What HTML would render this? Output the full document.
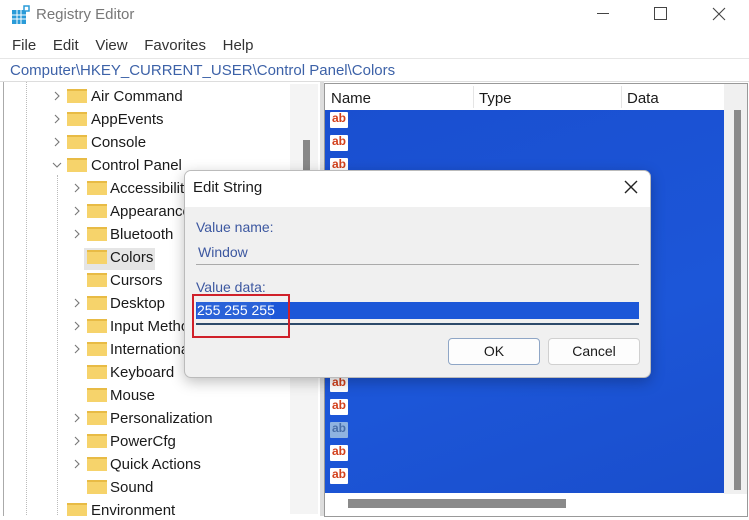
<!DOCTYPE html>
<html><head><meta charset="utf-8"><style>
*{margin:0;padding:0;box-sizing:border-box}
body{width:749px;height:520px;overflow:hidden;background:#fff;font-family:"Liberation Sans",sans-serif;position:relative;color:#1a1a1a}
.a{position:absolute;white-space:nowrap}
.t{font-size:15px}
.fold{position:absolute;width:20px;height:14px;background:#f6d36b;border-top:2px solid #e8bb45}
.chev{position:absolute;width:8px;height:12px}
.ab{position:absolute;left:330px;width:18px;height:16px;background:#fff;color:#d2401c;font-weight:bold;font-size:12px;line-height:13px;text-align:center;border-radius:1px}
</style></head><body>
<svg width="0" height="0" style="position:absolute"><defs><symbol id="cv" viewBox="0 0 8 12"><polyline points="2,2 6,6 2,10" fill="none" stroke="#777" stroke-width="1.1"/></symbol><symbol id="cd" viewBox="0 0 12 8"><polyline points="2,2 6,6 10,2" fill="none" stroke="#777" stroke-width="1.1"/></symbol></defs></svg>
<!-- title bar -->
<svg class="a" style="left:11px;top:5px" width="20" height="20"><rect x="1" y="5" width="14" height="14" fill="#2a9bd8"/><path d="M1 10h14M1 14h14M6 5v14M10 5v14" stroke="#fff" stroke-width="1"/><rect x="13" y="1" width="5" height="5" fill="#fff" stroke="#2a9bd8" stroke-width="1.5"/></svg>
<div class="a t" style="left:36px;top:6px;color:#777">Registry Editor</div>
<div class="a" style="left:597px;top:13px;width:12px;height:1px;background:#444"></div>
<div class="a" style="left:654px;top:7px;width:13px;height:13px;border:1px solid #444"></div>
<svg class="a" style="left:712px;top:7px" width="14" height="14"><path d="M1 1L13 13M13 1L1 13" stroke="#444" stroke-width="1.1"/></svg>
<div class="a t" style="left:12px;top:37px;color:#333">File&nbsp;&nbsp;&nbsp;&nbsp;Edit&nbsp;&nbsp;&nbsp;&nbsp;View&nbsp;&nbsp;&nbsp;&nbsp;Favorites&nbsp;&nbsp;&nbsp;&nbsp;Help</div>
<div class="a" style="left:0;top:58px;width:749px;height:1px;background:#e6e6e6"></div>
<div class="a t" style="left:10px;top:62px;color:#3d62a8">Computer\HKEY_CURRENT_USER\Control Panel\Colors</div>
<div class="a" style="left:0;top:81px;width:749px;height:1px;background:#ddd"></div>
<div class="a" style="left:3px;top:82px;width:1px;height:435px;background:#aaa"></div>
<div class="a" style="left:26px;top:82px;width:0;height:435px;border-left:1px dotted #bbb"></div>
<!-- tree scrollbar -->
<div class="a" style="left:290px;top:84px;width:28px;height:430px;background:#f4f4f4"></div>
<div class="a" style="left:303px;top:140px;width:7px;height:40px;background:#888"></div>
<div class="a" style="left:320px;top:82px;width:4px;height:435px;background:#ddd"></div>
<!-- tree -->
<svg class="chev" style="left:53px;top:90px"><use href="#cv"/></svg><div class="fold" style="left:67px;top:89px"></div><div class="a t" style="left:91px;top:88px">Air Command</div>
<svg class="chev" style="left:53px;top:113px"><use href="#cv"/></svg><div class="fold" style="left:67px;top:112px"></div><div class="a t" style="left:91px;top:111px">AppEvents</div>
<svg class="chev" style="left:53px;top:136px"><use href="#cv"/></svg><div class="fold" style="left:67px;top:135px"></div><div class="a t" style="left:91px;top:134px">Console</div>
<svg class="a" style="left:51px;top:161px" width="12" height="8"><use href="#cd"/></svg><div class="fold" style="left:67px;top:158px"></div><div class="a t" style="left:91px;top:157px">Control Panel</div>
<div class="a" style="left:57px;top:175px;width:0;height:340px;border-left:1px dotted #bbb"></div>
<div class="a" style="left:84px;top:248px;width:71px;height:22px;background:#e5e5e5"></div>
<svg class="chev" style="left:73px;top:182px"><use href="#cv"/></svg><div class="fold" style="left:87px;top:181px"></div><div class="a t" style="left:110px;top:180px">Accessibility</div>
<svg class="chev" style="left:73px;top:205px"><use href="#cv"/></svg><div class="fold" style="left:87px;top:204px"></div><div class="a t" style="left:110px;top:203px">Appearance</div>
<svg class="chev" style="left:73px;top:228px"><use href="#cv"/></svg><div class="fold" style="left:87px;top:227px"></div><div class="a t" style="left:110px;top:226px">Bluetooth</div>
<div class="fold" style="left:87px;top:250px"></div><div class="a t" style="left:110px;top:249px">Colors</div>
<div class="fold" style="left:87px;top:273px"></div><div class="a t" style="left:110px;top:272px">Cursors</div>
<svg class="chev" style="left:73px;top:297px"><use href="#cv"/></svg><div class="fold" style="left:87px;top:296px"></div><div class="a t" style="left:110px;top:295px">Desktop</div>
<svg class="chev" style="left:73px;top:320px"><use href="#cv"/></svg><div class="fold" style="left:87px;top:319px"></div><div class="a t" style="left:110px;top:318px">Input Method</div>
<svg class="chev" style="left:73px;top:343px"><use href="#cv"/></svg><div class="fold" style="left:87px;top:342px"></div><div class="a t" style="left:110px;top:341px">International</div>
<div class="fold" style="left:87px;top:365px"></div><div class="a t" style="left:110px;top:364px">Keyboard</div>
<div class="fold" style="left:87px;top:388px"></div><div class="a t" style="left:110px;top:387px">Mouse</div>
<svg class="chev" style="left:73px;top:412px"><use href="#cv"/></svg><div class="fold" style="left:87px;top:411px"></div><div class="a t" style="left:110px;top:410px">Personalization</div>
<svg class="chev" style="left:73px;top:435px"><use href="#cv"/></svg><div class="fold" style="left:87px;top:434px"></div><div class="a t" style="left:110px;top:433px">PowerCfg</div>
<svg class="chev" style="left:73px;top:458px"><use href="#cv"/></svg><div class="fold" style="left:87px;top:457px"></div><div class="a t" style="left:110px;top:456px">Quick Actions</div>
<div class="fold" style="left:87px;top:480px"></div><div class="a t" style="left:110px;top:479px">Sound</div>
<div class="fold" style="left:67px;top:503px"></div><div class="a t" style="left:91px;top:502px">Environment</div>
<div class="a" style="left:0;top:516px;width:749px;height:4px;background:#fff"></div>
<!-- right pane -->
<div class="a" style="left:324px;top:83px;width:424px;height:434px;border:1px solid #999;background:#fff"></div>
<div class="a t" style="left:331px;top:90px">Name</div>
<div class="a" style="left:473px;top:86px;width:1px;height:22px;background:#e5e5e5"></div>
<div class="a t" style="left:479px;top:90px">Type</div>
<div class="a" style="left:621px;top:86px;width:1px;height:22px;background:#e5e5e5"></div>
<div class="a t" style="left:627px;top:90px">Data</div>
<div class="a" style="left:724px;top:84px;width:23px;height:410px;background:#f0f0f0"></div>
<div class="a" style="left:734px;top:110px;width:7px;height:380px;background:#8a8a8a"></div>
<div class="a" style="left:325px;top:110px;width:399px;height:383px;background:linear-gradient(160deg,#1a4fd0,#1c56d8 60%,#1a4ecc)"></div>
<div class="ab" style="top:112px">ab</div><div class="ab" style="top:135px">ab</div><div class="ab" style="top:158px">ab</div>
<div class="ab" style="top:376px">ab</div><div class="ab" style="top:399px">ab</div><div class="ab" style="top:422px;background:#8fb3e0;color:#4a6fa8">ab</div><div class="ab" style="top:445px">ab</div><div class="ab" style="top:468px">ab</div>
<div class="a" style="left:348px;top:499px;width:218px;height:9px;background:#8a8a8a"></div>
<!-- dialog -->
<div class="a" style="left:184px;top:170px;width:467px;height:208px;background:#f0f0f0;border:1px solid #bbb;border-radius:7px;box-shadow:0 4px 14px rgba(0,0,0,.25);overflow:hidden">
<div style="position:absolute;left:0;top:0;width:100%;height:36px;background:#fff"></div>
</div>
<div class="a t" style="left:193px;top:179px">Edit String</div>
<svg class="a" style="left:624px;top:180px" width="14" height="14"><path d="M1 1L13 13M13 1L1 13" stroke="#222" stroke-width="1.4"/></svg>
<div class="a" style="left:196px;top:219px;font-size:14px;color:#3c57a0">Value name:</div>
<div class="a" style="left:196px;top:264px;width:443px;height:1px;background:#aaa"></div>
<div class="a" style="left:198px;top:244px;font-size:14px;color:#3c57a0">Window</div>
<div class="a" style="left:196px;top:279px;font-size:14px;color:#3c57a0">Value data:</div>
<div class="a" style="left:196px;top:302px;width:443px;height:17px;background:#1c57d8"></div>
<div class="a" style="left:197px;top:302px;width:74px;height:17px;background:#2a62d8;color:#fff;font-size:14px;line-height:17px">255 255 255</div>
<div class="a" style="left:196px;top:323px;width:443px;height:2px;background:#2d4a6a"></div>
<div class="a" style="left:192px;top:294px;width:98px;height:44px;border:2px solid #d0202a"></div>
<div class="a" style="left:448px;top:338px;width:92px;height:27px;background:#fdfdfd;border:1px solid #8fa6c6;border-radius:4px;font-size:14px;text-align:center;line-height:25px">OK</div>
<div class="a" style="left:548px;top:338px;width:92px;height:27px;background:#fdfdfd;border:1px solid #d0d0d0;border-radius:4px;font-size:14px;text-align:center;line-height:25px">Cancel</div>
</body></html>
